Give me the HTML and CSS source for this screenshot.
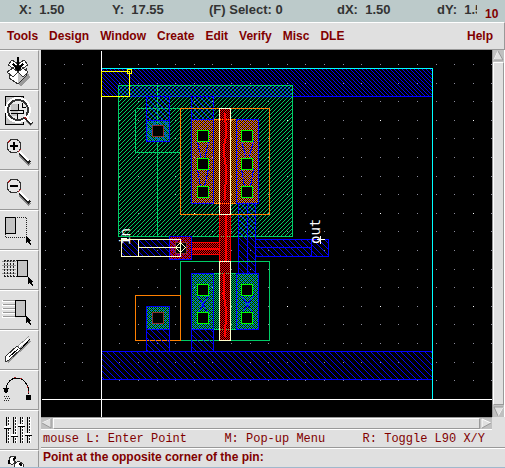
FILE: index.html
```html
<!DOCTYPE html>
<html lang="en">
<head>
  <meta charset="UTF-8" />
  <meta name="viewport" content="width=device-width, initial-scale=1.0"/>
  <title>Layout Editor</title>
  <link rel="stylesheet" href="styles.css">
</head>
<body>

  <header class="status">
    <span>X:&nbsp; 1.50</span>
    <span>Y:&nbsp; 17.55</span>
    <span>(F) Select: 0</span>
    <span>dX:&nbsp; 1.50</span>
    <span class="clip">dY:&nbsp; 1.5</span>
    <span class="window-number">10</span>
  </header>

  <nav class="menu">
    <button>Tools</button>
    <button>Design</button>
    <button>Window</button>
    <button>Create</button>
    <button>Edit</button>
    <button>Verify</button>
    <button>Misc</button>
    <button>DLE</button>
    <button class="help">Help</button>
  </nav>

  <main class="workspace">
    <div class="toolbar">
      <button aria-label="Save">
        <svg viewBox="0 0 38 38">
          <path class="shade" d="M18 33l3 2 9-9-3-6z"/>
          <path class="face" d="M9 19v8l9 6 8-8v-7l-8 4z"/>
          <path class="fill-grey" d="M18 22v10l8-7v-7z"/>
          <path class="face" d="M12 9l-4 5 5 3 5-4zM24 9l4 5-5 3-5-4zM13 17l-6 4 6 5 5-5zM23 17l5 4-5 5-5-5z"/>
          <path class="bold" d="M18 6v14"/>
          <path class="cursor" d="M12 13l2-1 4 5 4-5 2 1-6 8z"/>
        </svg>
      </button>
      <button aria-label="Fit">
        <svg viewBox="0 0 38 38">
          <path class="fill-grey" d="M5 5h18v28h-18z"/>
          <path class="line" d="M5 5h18v28h-18z"/>
          <circle class="glint" cx="18" cy="19" r="12"/>
          <circle class="lens wide" cx="18" cy="19" r="10"/>
          <path class="fill-grey" d="M11 13h7v12h-7z"/>
          <path class="line" d="M10 19h8v-6M11 22h12v-3h-5M17 22v6M22 12v4h4"/>
          <path class="handle-shade" d="M27 29l5 5"/>
          <path class="handle-edge" d="M25 26l7 7"/>
          <path class="handle" d="M25 25l7 7"/>
          <path class="rust" d="M24 26l3 2"/>
        </svg>
      </button>
      <button aria-label="Zoom in">
        <svg viewBox="0 0 38 38">
          <path class="handle-shade" d="M20 24l10 10"/>
          <path class="handle-edge" d="M20 22l10 10"/>
          <path class="handle" d="M20 21l9 9"/>
          <circle class="lens" cx="14" cy="15" r="7"/>
          <path class="rust" d="M8 12l2-3M18 21l3-3"/>
          <path class="bold" d="M10 15h8M14 11v8"/>
        </svg>
      </button>
      <button aria-label="Zoom out">
        <svg viewBox="0 0 38 38">
          <path class="handle-shade" d="M20 24l10 10"/>
          <path class="handle-edge" d="M20 22l10 10"/>
          <path class="handle" d="M20 21l9 9"/>
          <circle class="lens" cx="14" cy="15" r="7"/>
          <path class="rust" d="M8 12l2-3M18 21l3-3"/>
          <path class="bold" d="M10 15h8"/>
        </svg>
      </button>
      <button aria-label="Stretch">
        <svg viewBox="0 0 38 38">
          <path class="fill-grey" d="M6 6h9v16h-9z"/>
          <path class="line" d="M5 6h10v16h-10z"/>
          <path class="dots" d="M15 6h11v20h-21v-4"/>
          <path class="cursor" d="M26 25v7l2-1 2 3 1-1-1-3h2z"/>
        </svg>
      </button>
      <button aria-label="Copy">
        <svg viewBox="0 0 38 38">
          <path class="faint" d="M2 10h14M2 14h14M2 18h14M2 22h14"/>
          <path class="dash" d="M4 9v17M7 9v17M10 9v17M13 9v17M4 9h13M4 25h13"/>
          <path class="fill-grey" d="M17 9h10v16h-10z"/>
          <path class="line" d="M17 9h10v16h-10z"/>
          <path class="cursor" d="M28 26v7l2-1 2 3 1-1-1-3h2z"/>
        </svg>
      </button>
      <button aria-label="Move">
        <svg viewBox="0 0 38 38">
          <path class="glint" d="M2 10h13M2 14h13M2 18h13M2 22h13M2 26h13"/>
          <path class="faint" d="M3 9h12M3 13h12M3 17h12M3 21h12M3 25h12"/>
          <path class="fill-grey" d="M15 9h10v16h-10z"/>
          <path class="line" d="M15 9h10v16h-10z"/>
          <path class="cursor" d="M26 25v7l2-1 2 3 1-1-1-3h2z"/>
        </svg>
      </button>
      <button aria-label="Chop">
        <svg viewBox="0 0 38 38">
          <path class="shade" d="M8 32l23-21-1-3-24 21z"/>
          <path class="face" d="M5 29l1-4 11-10 4 3-12 11-4 2z"/>
          <path class="shade" d="M17 15l12-10-9 13z"/>
          <path class="line" d="M9 26l9-8M21 18l9-10"/>
          <path class="glint" d="M19 16l9-8"/>
        </svg>
      </button>
      <button aria-label="Undo">
        <svg viewBox="0 0 38 38">
          <path class="line" d="M6 19c0-7 5-12 11-12s12 6 12 16"/>
          <path class="rust" d="M14 7l2-1M20 7l2 1M27 15l1 2M28 20v2"/>
          <path class="cursor" d="M3 17h6l-2 5h-2z"/>
          <path class="dots" d="M4 25h6M5 27h5M4 29h6"/>
          <path class="solid" d="M26 24h5v5h-5z"/>
        </svg>
      </button>
      <button aria-label="Properties">
        <svg viewBox="0 0 38 38">
          <path class="glint" d="M9 6v26M16 6v26M23 6v26M30 6v26"/>
          <path class="line" d="M6 6v26M13 6v26M20 6v26M27 6v26"/>
          <path class="dash" d="M8 6v26M15 6v26M22 6v26M29 6v26"/>
          <path class="glint" d="M4 16h6M11 24h6M18 14h6M25 23h6"/>
          <path class="line" d="M4 17h7M11 25h7M18 15h7M25 24h7"/>
        </svg>
      </button>
      <button aria-label="Repeat">
        <svg viewBox="0 0 38 38">
          <path class="face" d="M9 7l3-2 4 1-3 3 3 2-4 3-3-3z"/>
          <path class="face" d="M14 13l5-3 5 4-2 5 5 8-5 3-6-11z"/>
          <path class="bold" d="M13 8l3-1M19 13l3 1M9 9v4"/>
        </svg>
      </button>
    </div>

    <section class="editor">
      <svg class="canvas" role="img" aria-label="Inverter layout">
        <defs>
          <pattern id="grid" x="45" y="64" width="93" height="93" patternUnits="userSpaceOnUse">
            <path class="grid-dots" d="M0 0.5h93M0 19.5h93M0 37.5h93M0 56.5h93M0 74.5h93"/>
            <rect x="56" y="56" width="1" height="1" fill="#fff"/>
          </pattern>
          <pattern id="metal" width="6" height="6" patternUnits="userSpaceOnUse" patternTransform="translate(-0.5 -0.5)">
            <path fill="#00f" d="M1 0h1v1h-1zM2 1h1v1h-1zM3 2h1v1h-1zM4 3h1v1h-1zM5 4h1v1h-1zM0 5h1v1h-1z"/>
          </pattern>
          <pattern id="metalRail" width="4" height="4" patternUnits="userSpaceOnUse" patternTransform="translate(-0.5 -0.5)">
            <path fill="#00f" d="M1 0h1v1h-1zM2 1h1v1h-1zM3 2h1v1h-1zM0 3h1v1h-1z"/>
          </pattern>
          <pattern id="well" width="4" height="4" patternUnits="userSpaceOnUse" patternTransform="translate(-0.5 -0.5)">
            <path fill="#00cc66" d="M0 0h1v1h-1zM3 1h1v1h-1zM2 2h1v1h-1zM1 3h1v1h-1z"/>
          </pattern>
          <pattern id="pdiff" width="2" height="2" patternUnits="userSpaceOnUse" patternTransform="translate(-0.5 -0.5)">
            <path fill="#ff8000" d="M0 0h1v1h-1zM1 1h1v1h-1z"/>
          </pattern>
          <pattern id="ndiff" width="2" height="2" patternUnits="userSpaceOnUse" patternTransform="translate(-0.5 -0.5)">
            <path fill="#00cc66" d="M0 0h1v1h-1zM1 1h1v1h-1z"/>
          </pattern>
          <pattern id="overDiff" width="4" height="4" patternUnits="userSpaceOnUse" patternTransform="translate(-0.5 -0.5)">
            <path fill="#00f" d="M1 0h1v1h-1zM3 2h1v1h-1z"/>
          </pattern>
          <pattern id="poly" width="2" height="2" patternUnits="userSpaceOnUse" patternTransform="translate(-0.5 -0.5)">
            <path fill="#f00" d="M0 0h1v1h-1zM1 1h1v1h-1z"/>
          </pattern>
          <g id="cut">
            <rect width="11" height="11" fill="#000" stroke="#0f0"/>
          </g>
          <g id="tapCut">
            <rect width="11" height="11" fill="#000" stroke="#8b3030"/>
          </g>
        </defs>

        <!-- window coordinates, shifted to the canvas corner -->
        <g transform="translate(-41 -50)">
          <rect x="41" y="50" width="3000" height="3000" fill="url(#grid)"/>

          <g transform="translate(0.5 0.5)">
            <!-- supply rails -->
            <rect class="metal-rail" x="101" y="68" width="331" height="28"/>
            <rect class="metal" x="101" y="351" width="331" height="28"/>

            <!-- n-well and its tap -->
            <rect class="well" x="118" y="85" width="174" height="151"/>
            <path class="green" d="M157 85v151M135 108h45M135 108v44h45"/>
            <rect class="metal" x="146" y="96" width="23" height="45"/>
            <rect class="ndiff" x="146" y="120" width="23" height="21"/>
            <rect class="over-diff" x="146" y="120" width="23" height="21"/>
            <use href="#tapCut" x="152" y="125"/>

            <!-- pmos -->
            <rect class="metal" x="191" y="96" width="22" height="23"/>
            <rect class="metal" x="238" y="203" width="17" height="70"/>
            <path class="blue" d="M247 203v70"/>
            <rect class="pdiff" x="191" y="119" width="67" height="84"/>
            <rect class="over-diff" x="191" y="119" width="22" height="84"/>
            <rect class="over-diff" x="236" y="119" width="22" height="84"/>
            <path class="blue" d="M197 141l3 14-3 14 3 17M208 141l-3 14 3 14-4 17M241 141l4 14-4 14 3 17M253 141l-4 14 4 14-3 17"/>
            <use href="#cut" x="197" y="130"/>
            <use href="#cut" x="197" y="158"/>
            <use href="#cut" x="197" y="186"/>
            <use href="#cut" x="241" y="130"/>
            <use href="#cut" x="241" y="158"/>
            <use href="#cut" x="241" y="186"/>
            <rect class="orange" x="180" y="108" width="89" height="106"/>

            <!-- nmos -->
            <rect class="green" x="180" y="261" width="89" height="79"/>
            <rect class="metal" x="191" y="329" width="22" height="22"/>
            <rect class="ndiff" x="191" y="273" width="67" height="56"/>
            <rect class="over-diff" x="191" y="273" width="22" height="56"/>
            <rect class="over-diff" x="236" y="273" width="22" height="56"/>
            <path class="blue" d="M197 295l10 17M208 295l-10 17M241 295l11 17M253 295l-11 17"/>
            <use href="#cut" x="197" y="284"/>
            <use href="#cut" x="197" y="312"/>
            <use href="#cut" x="241" y="284"/>
            <use href="#cut" x="241" y="312"/>

            <!-- substrate tap -->
            <rect class="orange" x="135" y="295" width="45" height="45"/>
            <rect class="metal" x="146" y="329" width="23" height="22"/>
            <rect class="ndiff" x="146" y="306" width="23" height="23"/>
            <rect class="over-diff" x="146" y="306" width="23" height="23"/>
            <use href="#tapCut" x="152" y="312"/>

            <!-- gate -->
            <rect class="poly" x="219" y="108" width="11" height="232"/>
            <rect class="poly" x="191" y="242" width="28" height="12"/>
            <path class="red" d="M224 112l2 20-3 18 3 20-2 30M225 214v47M191 248h28M224 273l-1 20 3 20-2 24"/>
            <rect class="cream" x="219" y="108" width="11" height="106"/>
            <rect class="cream" x="219" y="261" width="11" height="79"/>

            <!-- input pin -->
            <rect class="metal" x="121" y="239" width="59" height="17"/>
            <rect class="poly" x="169" y="236" width="22" height="23"/>
            <rect class="over-diff" x="169" y="236" width="22" height="23"/>
            <rect x="175" y="242" width="11" height="11" fill="#000" stroke="#8b3030"/>
            <path class="cream" d="M121 239h59v17h-59zM138 239v17M138 247h42"/>
            <path class="cream" d="M175 247l5-5 5 5-5 5z"/>
            <path class="white" d="M120 238h6"/>

            <!-- output pin -->
            <rect class="metal" x="255" y="239" width="73" height="17"/>
            <path class="blue" d="M255 247h56M311 239v17"/>
            <path class="white" d="M316 239h8M320 235v8"/>

            <!-- cell boundary and axes -->
            <path class="cyan" d="M101 68h331v331"/>
            <path class="white" d="M101 50v3000M41 399h3000"/>

            <!-- pin being drawn -->
            <path class="yellow" d="M101 71h28v25h-28zM127 69h4v4h-4z"/>
          </g>

          <text class="pin-name" transform="translate(130 245) rotate(-90)">in</text>
          <text class="pin-name" transform="translate(320 244) rotate(-90)">out</text>
        </g>
      </svg>

      <div class="scroll vertical">
        <button aria-label="Scroll up"><svg viewBox="0 0 11 11"><path class="light" d="M1 10l4-9"/><path class="dark" d="M5 1l5 9h-9"/></svg></button>
        <div class="thumb"></div>
        <button aria-label="Scroll down"><svg viewBox="0 0 11 11"><path class="light" d="M10 1l-5 9"/><path class="dark" d="M10 1h-9l4 9"/></svg></button>
      </div>

      <div class="scroll horizontal">
        <button aria-label="Scroll left"><svg viewBox="0 0 11 11"><path class="light" d="M1 5l9-4"/><path class="dark" d="M10 1v9l-9-5"/></svg></button>
        <div class="thumb"></div>
        <button aria-label="Scroll right"><svg viewBox="0 0 11 11"><path class="light" d="M1 10v-9l9 4"/><path class="dark" d="M10 5l-9 5"/></svg></button>
      </div>

      <div class="mouse">
        <span>mouse L: Enter Point</span>
        <span>M: Pop-up Menu</span>
        <span>R: Toggle L90 X/Y</span>
      </div>
      <div class="prompt">Point at the opposite corner of the pin:</div>
    </section>
  </main>

</body>
</html>
```

FILE: styles.css
```css
* {
  box-sizing: border-box;
}

body {
  margin: 0;
  height: 100vh;
  display: flex;
  flex-direction: column;
  overflow: hidden;
  background: #e0e0e0;
  color: #800000;
  font: bold 12px/16px "Liberation Sans", Arial, sans-serif;
  border-bottom: 1px solid #a0b8cc;
}

button {
  margin: 0;
  padding: 0;
  border: 0;
  background: none;
  color: inherit;
  font: inherit;
}

svg {
  display: block;
}

/* coordinate readout */
.status {
  display: grid;
  grid-template-columns: 93fr 97fr 128fr 100fr 40fr 28fr;
  height: 22px;
  flex: none;
  padding: 2px 0 0 19px;
  overflow: hidden;
  background: #bccaca;
  color: #333;
  font-size: 13px;
  white-space: nowrap;
}

.clip {
  overflow: hidden;
}

.window-number {
  padding: 4px 0 0 8px;
  color: #800000;
  font-size: 12px;
}

.menu {
  display: flex;
  gap: 11px;
  height: 28px;
  flex: none;
  padding: 0 11px 0 7px;
  border-top: 1px solid #fff;
  border-right: 1px solid #999;
  border-bottom: 1px solid #999;
}

.help {
  margin-left: auto;
}

.workspace {
  display: flex;
  flex: 1;
  min-height: 0;
}

/* tool icons */
.toolbar {
  width: 41px;
  flex: none;
  overflow: hidden;
  border-right: 2px solid #e0e0e0;
}

.toolbar button {
  display: block;
  width: 39px;
  height: 40px;
  border-top: 1px solid #fff;
  border-right: 1px solid #999;
  border-bottom: 1px solid #999;
}

.toolbar svg {
  width: 38px;
  height: 38px;
  fill: none;
  shape-rendering: crispEdges;
}

.toolbar .line { stroke: #000; }
.toolbar .bold { stroke: #000; stroke-width: 2; }
.toolbar .face { fill: #fff; stroke: #333; }
.toolbar .shade { fill: #999; }
.toolbar .fill-grey { fill: #c4c4c4; }
.toolbar .glint { stroke: #fff; stroke-width: 2; }
.toolbar .lens { fill: #e8e8e8; stroke: #333; }
.toolbar .wide { stroke-width: 2; }
.toolbar .handle { stroke: #fff; stroke-width: 2; }
.toolbar .handle-edge { stroke: #222; stroke-width: 4; }
.toolbar .handle-shade { stroke: #888; stroke-width: 3; }
.toolbar .rust { stroke: #a02020; }
.toolbar .faint { stroke: #999; }
.toolbar .dots { stroke: #222; stroke-dasharray: 1 1; }
.toolbar .dash { stroke: #222; stroke-dasharray: 2 1; }
.toolbar .cursor { fill: #000; }
.toolbar .solid { fill: #000; }

.editor {
  flex: 1;
  min-width: 0;
  display: grid;
  grid-template-columns: 1fr 13px;
  grid-template-rows: 1fr 13px 18px 19px;
}

/* drawing area */
.canvas {
  width: 100%;
  height: 100%;
  min-height: 0;
  overflow: hidden;
  background: #000;
  fill: none;
  shape-rendering: crispEdges;
}

.grid-dots {
  stroke: #8c8c9c;
  stroke-dasharray: 1 18 1 17 1 18 1 17 1 18;
}

.metal { fill: url(#metal); stroke: #00f; }
.metal-rail { fill: url(#metalRail); stroke: #00f; }
.over-diff { fill: url(#overDiff); stroke: #00f; }
.well { fill: url(#well); stroke: #00cc66; }
.pdiff { fill: url(#pdiff); stroke: #ff8000; }
.ndiff { fill: url(#ndiff); stroke: #00cc66; }
.poly { fill: url(#poly); stroke: #f00; }
.blue { stroke: #00f; }
.green { stroke: #00cc66; }
.orange { stroke: #ff8000; }
.red { stroke: #f00; stroke-width: 2; }
.cyan { stroke: #0ff; }
.yellow { stroke: #ff0; }
.cream { stroke: #ffffcc; }
.white { stroke: #fff; }

.pin-name {
  fill: #fff;
  font: 14px "DejaVu Sans Mono", monospace;
}

/* scroll bars */
.scroll {
  display: flex;
  gap: 1px;
  background: #c0c0c0;
}

.vertical {
  flex-direction: column;
  border-left: 1px solid #999;
  border-right: 1px solid #fff;
}

.horizontal {
  grid-column: 1;
  border-top: 1px solid #999;
  border-bottom: 1px solid #fff;
}

.scroll button {
  width: 11px;
  height: 11px;
  flex: none;
}

.scroll svg {
  width: 11px;
  height: 11px;
  fill: #e0e0e0;
}

.light { stroke: #fff; }
.dark { stroke: #999; }

.thumb {
  flex: 1;
  background: #e0e0e0;
  border: 1px solid;
  border-color: #fff #999 #999 #fff;
}

/* hints under the drawing */
.mouse {
  grid-column: 1 / -1;
  display: flex;
  justify-content: space-between;
  padding: 1px 20px 0 2px;
  border-bottom: 1px solid #999;
  font: 12px/16px "Liberation Mono", "Courier New", monospace;
  white-space: nowrap;
}

.prompt {
  grid-column: 1 / -1;
  padding: 0 2px;
  border-top: 1px solid #fff;
}
```
